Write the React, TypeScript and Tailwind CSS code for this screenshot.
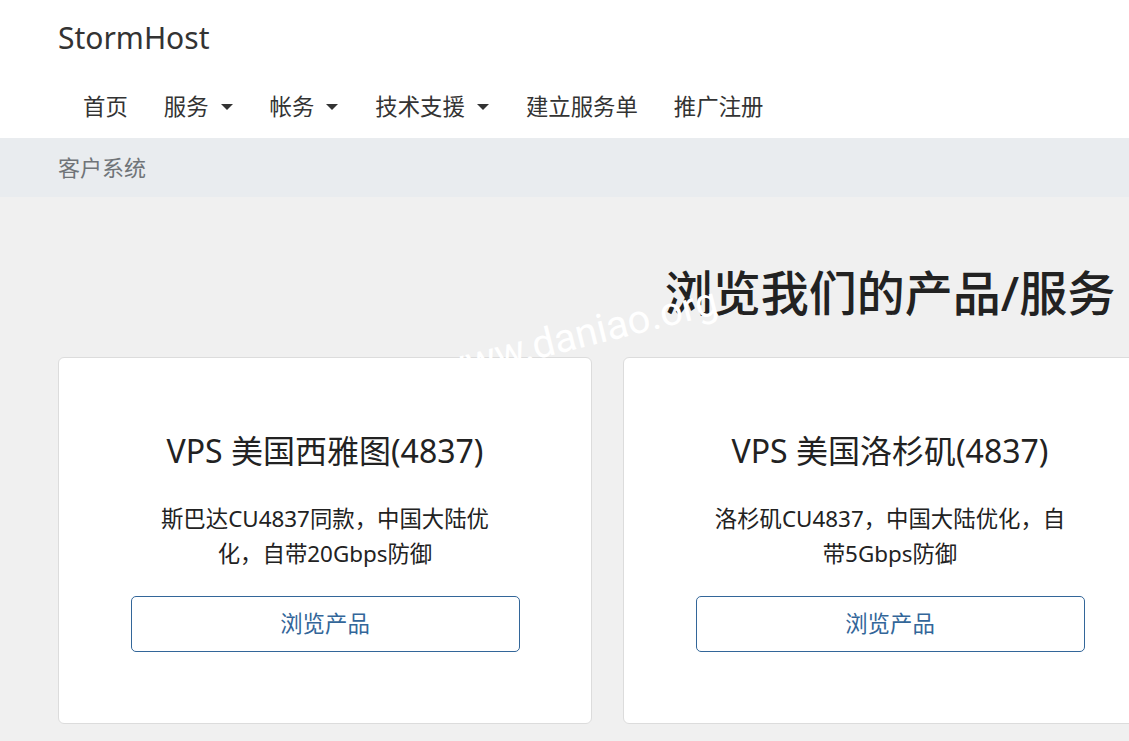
import React from 'react';

const navItems = [
  { label: '首页', caret: false },
  { label: '服务', caret: true },
  { label: '帐务', caret: true },
  { label: '技术支援', caret: true },
  { label: '建立服务单', caret: false },
  { label: '推广注册', caret: false },
];

const products = [
  {
    name: 'VPS 美国西雅图(4837)',
    desc: '斯巴达CU4837同款，中国大陆优化，自带20Gbps防御',
  },
  {
    name: 'VPS 美国洛杉矶(4837)',
    desc: '洛杉矶CU4837，中国大陆优化，自带5Gbps防御',
  },
  {
    name: 'VPS 美国达拉斯(4837)',
    desc: '达拉斯CU4837，中国大陆优化，自带5Gbps防御',
  },
];

const Caret = () => (
  <span className="ml-[12px] mr-[1px] inline-block h-0 w-0 border-x-[6px] border-t-[6px] border-x-transparent border-t-[#333]" />
);

export default function App() {
  return (
    <div
      className="relative h-[741px] w-full overflow-hidden bg-[#f0f0f0] text-[#222]"
      style={{ fontFamily: '"Noto Sans", "Noto Sans CJK SC", sans-serif' }}
    >
      {/* Header */}
      <header className="bg-white">
        <div className="ml-[58px] w-[1664px]">
          <div className="flex h-[76px] items-center">
            <span className="text-[30px] leading-none text-[#333]">StormHost</span>
          </div>
          <nav className="flex h-[62px] items-center pl-[7px]">
            {navItems.map((item) => (
              <a
                key={item.label}
                className="flex items-center px-[18px] text-[22.4px] leading-none text-[#333]"
              >
                {item.label}
                {item.caret && <Caret />}
              </a>
            ))}
          </nav>
        </div>
      </header>

      {/* Breadcrumb */}
      <div className="bg-[#e9ecef]">
        <div className="ml-[58px] flex h-[59px] w-[1664px] items-center text-[22px] text-[#707478]">
          客户系统
        </div>
      </div>

      {/* Main */}
      <main className="ml-[58px] w-[1664px]">
        <h1 className="mt-[67px] text-center text-[48px] font-medium leading-[1.2] text-[#222]">
          浏览我们的产品/服务
        </h1>
        <div className="mt-[35px] grid grid-cols-3 gap-[31px]">
          {products.map((p) => (
            <div
              key={p.name}
              className="flex h-[367px] flex-col items-center rounded-[6px] border border-[#dcdcdc] bg-white px-[72px] pt-[74px]"
            >
              <h3 className="whitespace-nowrap text-[32px] leading-[1.2] text-[#222]">{p.name}</h3>
              <p className="mt-[31px] w-[360px] text-center text-[22.4px] leading-[35px] text-[#222]">
                {p.desc}
              </p>
              <button className="mt-[25px] h-[56px] w-[389px] shrink-0 rounded-[5px] border border-[#336699] text-[22.4px] text-[#336699]">
                浏览产品
              </button>
            </div>
          ))}
        </div>
      </main>

      {/* watermark */}
      <div
        className="pointer-events-none absolute left-[440px] top-[350px] origin-[0_80%] -rotate-[14deg] whitespace-nowrap text-[40px] leading-none text-white"
        style={{ fontFamily: 'Roboto, sans-serif' }}
      >
        www.daniao.org
      </div>
    </div>
  );
}
